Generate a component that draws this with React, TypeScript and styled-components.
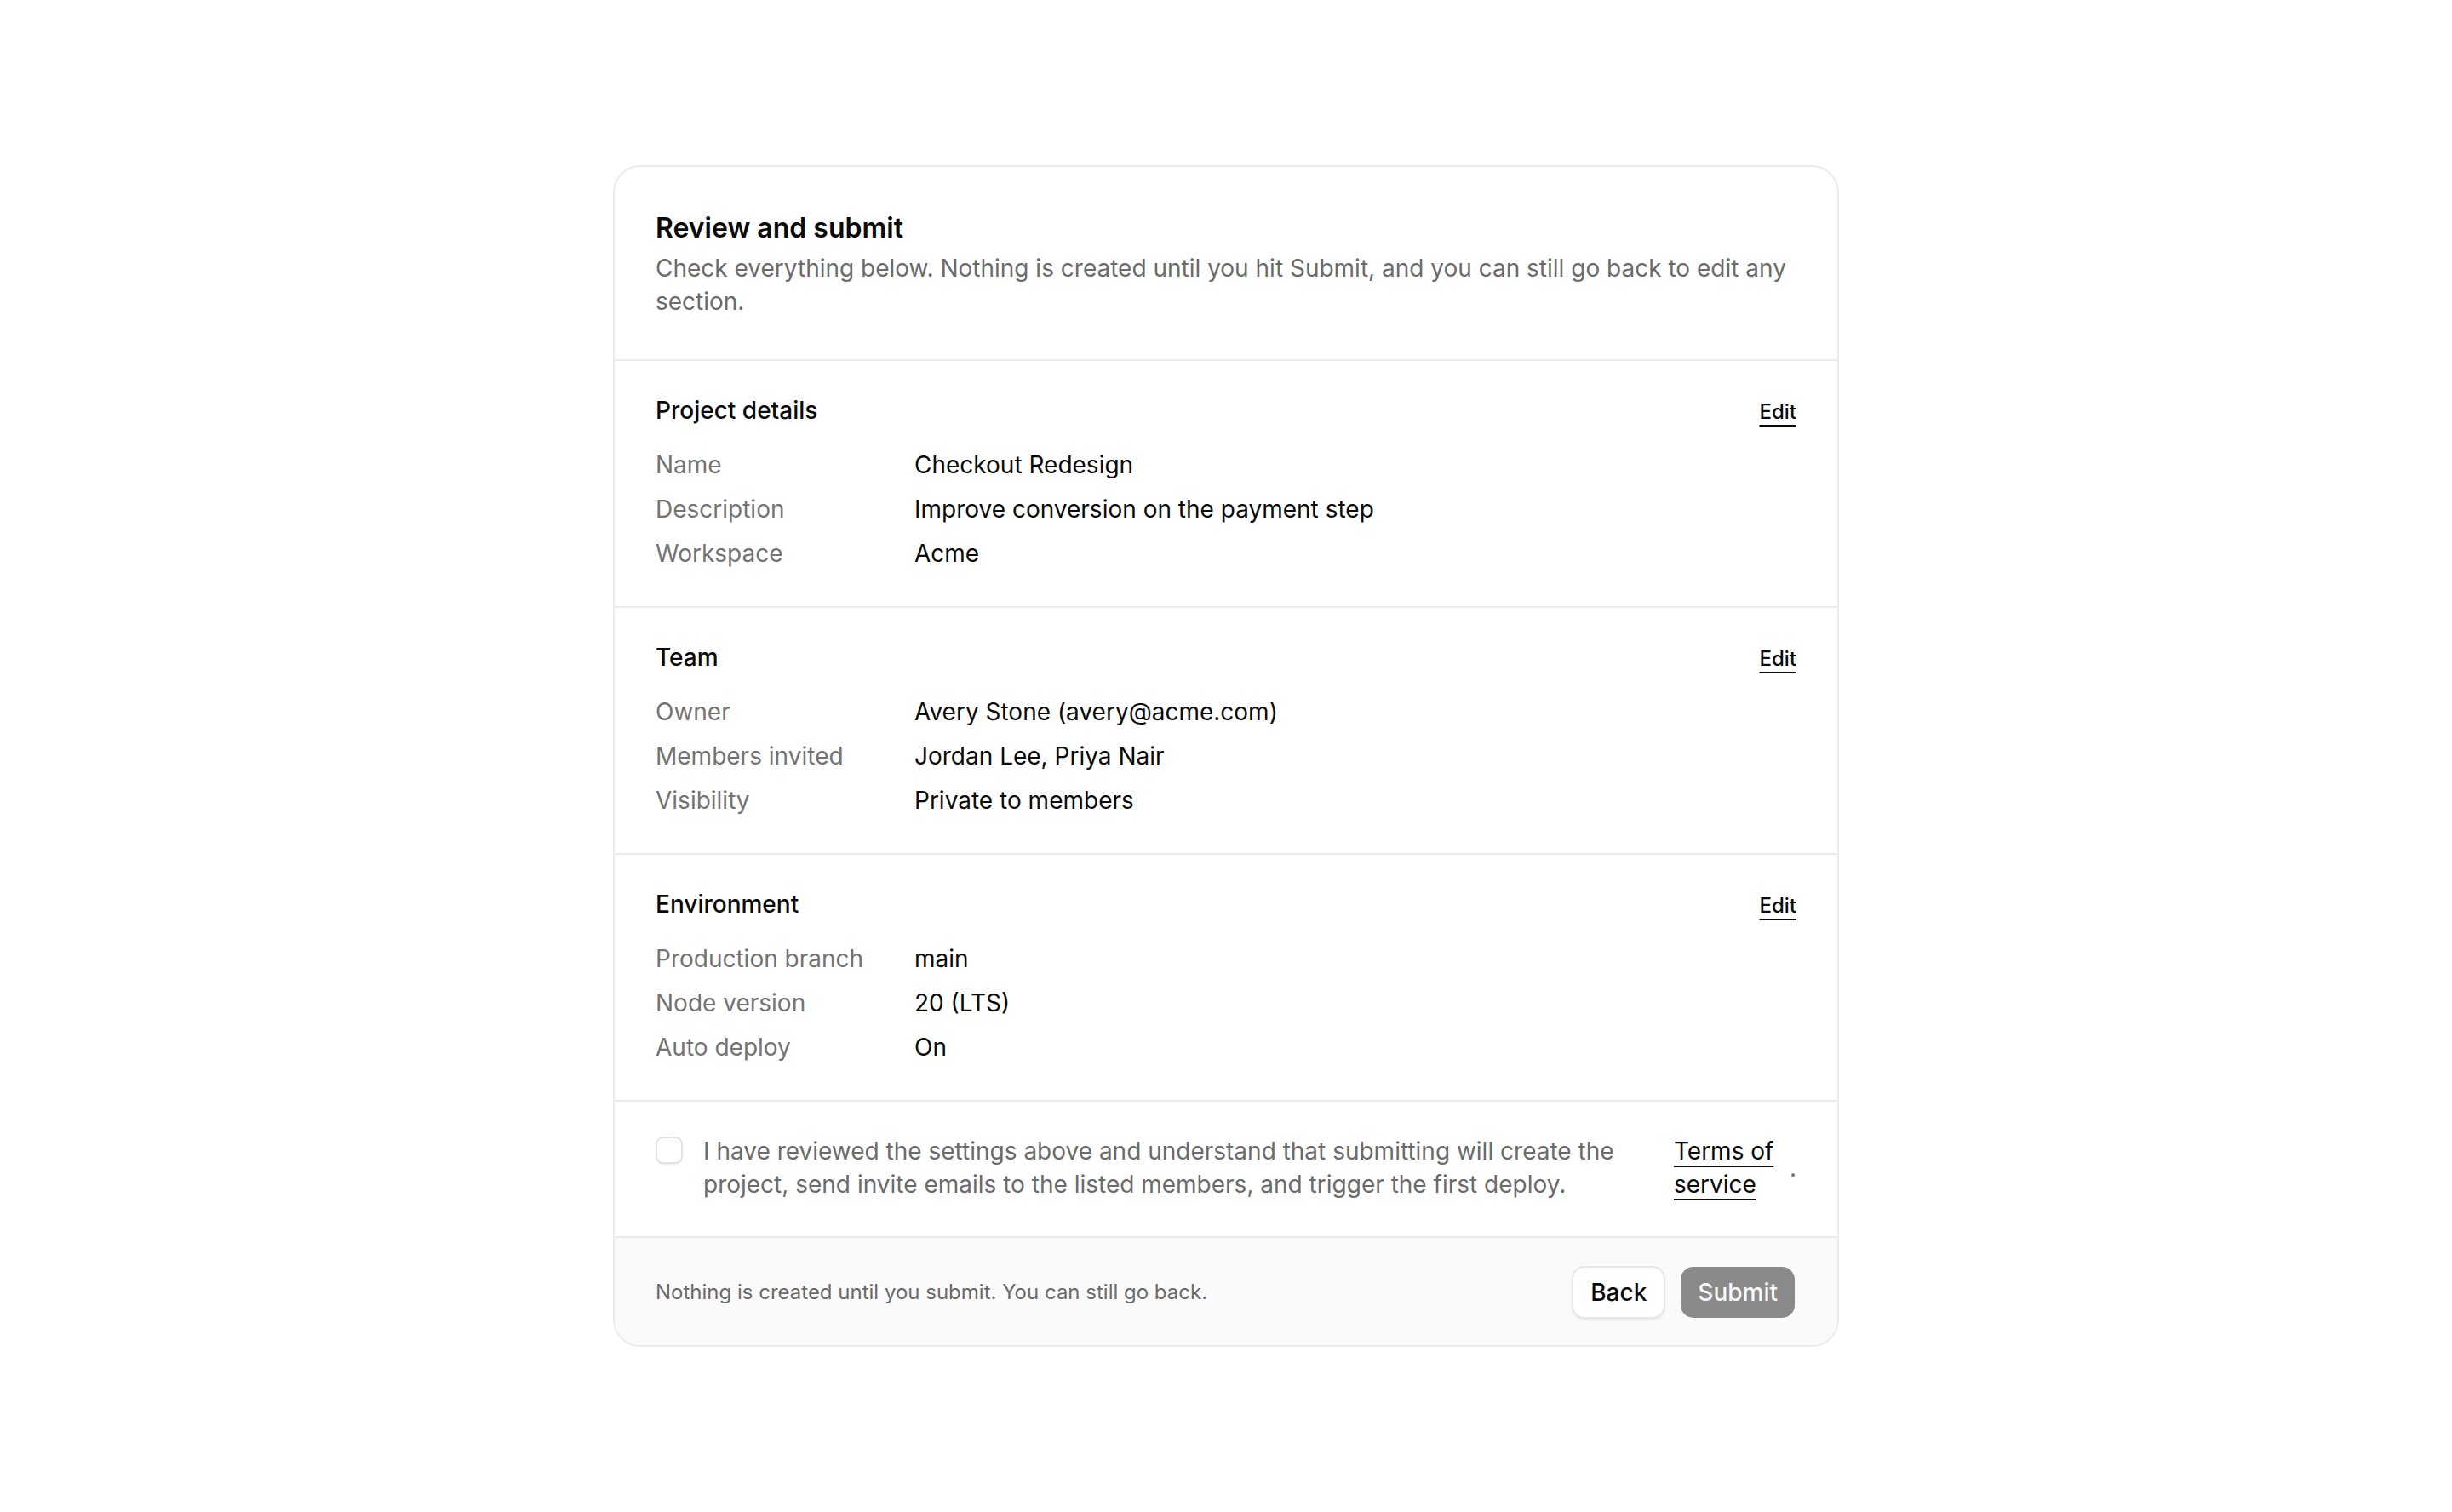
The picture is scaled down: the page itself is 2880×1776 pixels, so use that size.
import React, { FC } from 'react'
import styled, { createGlobalStyle } from 'styled-components'

const GlobalStyle = createGlobalStyle`
  * {
    box-sizing: border-box;
  }
  html,
  body {
    margin: 0;
    padding: 0;
    background: #ffffff;
    font-family: Inter, 'Noto Sans', 'Liberation Sans', sans-serif;
    color: #0a0a0a;
  }
`

const Page = styled.main`
  min-height: 100vh;
  display: flex;
  align-items: center;
  justify-content: center;
  padding: 40px;
`

const Card = styled.section`
  width: 1440px;
  border: 2px solid #ebebeb;
  border-radius: 32px;
  background: #ffffff;
  overflow: hidden;
`

const Header = styled.header`
  padding: 48px;
`

const Title = styled.h1`
  margin: 0;
  font-size: 32px;
  line-height: 48px;
  font-weight: 600;
  color: #0a0a0a;
`

const Subtitle = styled.p`
  margin: 4px 0 0;
  font-size: 28px;
  line-height: 1.4;
  color: #6b6b6b;
`

const Section = styled.div`
  border-top: 2px solid #ebebeb;
  padding: 40px 48px 42px;
`

const SectionHead = styled.div`
  display: flex;
  align-items: baseline;
  justify-content: space-between;
  margin-bottom: 26px;
`

const SectionTitle = styled.h2`
  margin: 0;
  font-size: 28px;
  line-height: 36px;
  font-weight: 500;
  color: #0a0a0a;
`

const EditLink = styled.a`
  font-size: 24px;
  font-weight: 500;
  color: #0a0a0a;
  text-decoration: underline;
  text-decoration-thickness: 2px;
  text-underline-offset: 7px;
  cursor: pointer;
`

const Rows = styled.dl`
  display: grid;
  grid-template-columns: 280px 1fr;
  column-gap: 24px;
  row-gap: 12px;
  margin: 0;
`

const Label = styled.dt`
  font-size: 28px;
  line-height: 40px;
  color: #737373;
`

const Value = styled.dd`
  margin: 0;
  font-size: 28px;
  line-height: 40px;
  color: #0a0a0a;
`

const Consent = styled.label`
  display: flex;
  align-items: flex-start;
  gap: 24px;
  border-top: 2px solid #ebebeb;
  padding: 39px 48px 41px;
  font-size: 28px;
  line-height: 1.4;
`

const Check = styled.input`
  appearance: none;
  flex: 0 0 auto;
  width: 32px;
  height: 32px;
  margin: 2px 0 0;
  border: 2px solid #e2e2e2;
  border-radius: 9px;
  background: #ffffff;
  box-shadow: 0 2px 2px rgba(0, 0, 0, 0.05);
`

const ConsentText = styled.span`
  flex: 1 1 auto;
  color: #6b6b6b;
`

const TermsLink = styled.a`
  flex: 0 0 118px;
  color: #0a0a0a;
  text-decoration: underline;
  text-decoration-thickness: 2px;
  text-underline-offset: 7px;
  cursor: pointer;
`

const Dot = styled.span`
  align-self: center;
  margin-left: -6px;
  color: #737373;
`

const Footer = styled.footer`
  display: flex;
  align-items: center;
  justify-content: space-between;
  border-top: 2px solid #ebebeb;
  background: #fafafa;
  padding: 33px 50px 31px 48px;
`

const FooterNote = styled.p`
  margin: 0;
  font-size: 24px;
  line-height: 36px;
  color: #6b6b6b;
`

const Actions = styled.div`
  display: flex;
  align-items: center;
  gap: 18px;
`

const Button = styled.button<{ $primary?: boolean }>`
  height: ${(p) => (p.$primary ? '60px' : '62px')};
  padding: 0 20px;
  border-radius: 15px;
  font-family: inherit;
  font-size: 28px;
  font-weight: 500;
  border: ${(p) => (p.$primary ? 'none' : '2px solid #e6e6e6')};
  background: ${(p) => (p.$primary ? '#8a8a8a' : '#ffffff')};
  color: ${(p) => (p.$primary ? '#f7f7f7' : '#0a0a0a')};
  box-shadow: ${(p) => (p.$primary ? 'none' : '0 2px 3px rgba(0, 0, 0, 0.06)')};
  cursor: pointer;
`

type Row = [string, string]

type ReviewSection = {
  title: string
  rows: Row[]
}

const sections: ReviewSection[] = [
  {
    title: 'Project details',
    rows: [
      ['Name', 'Checkout Redesign'],
      ['Description', 'Improve conversion on the payment step'],
      ['Workspace', 'Acme'],
    ],
  },
  {
    title: 'Team',
    rows: [
      ['Owner', 'Avery Stone (avery@acme.com)'],
      ['Members invited', 'Jordan Lee, Priya Nair'],
      ['Visibility', 'Private to members'],
    ],
  },
  {
    title: 'Environment',
    rows: [
      ['Production branch', 'main'],
      ['Node version', '20 (LTS)'],
      ['Auto deploy', 'On'],
    ],
  },
]

const SummarySection: FC<ReviewSection> = ({ title, rows }) => (
  <Section>
    <SectionHead>
      <SectionTitle>{title}</SectionTitle>
      <EditLink>Edit</EditLink>
    </SectionHead>
    <Rows>
      {rows.map(([label, value]) => (
        <React.Fragment key={label}>
          <Label>{label}</Label>
          <Value>{value}</Value>
        </React.Fragment>
      ))}
    </Rows>
  </Section>
)

const App: FC = () => (
  <>
    <GlobalStyle />
    <Page>
      <Card>
        <Header>
          <Title>Review and submit</Title>
          <Subtitle>
            Check everything below. Nothing is created until you hit Submit, and you can
            still go back to edit any section.
          </Subtitle>
        </Header>
        {sections.map((s) => (
          <SummarySection key={s.title} {...s} />
        ))}
        <Consent>
          <Check type="checkbox" />
          <ConsentText>
            I have reviewed the settings above and understand that submitting will create
            the project, send invite emails to the listed members, and trigger the first
            deploy.
          </ConsentText>
          <TermsLink>Terms of service</TermsLink>
          <Dot>.</Dot>
        </Consent>
        <Footer>
          <FooterNote>Nothing is created until you submit. You can still go back.</FooterNote>
          <Actions>
            <Button>Back</Button>
            <Button $primary disabled>
              Submit
            </Button>
          </Actions>
        </Footer>
      </Card>
    </Page>
  </>
)

export default App
